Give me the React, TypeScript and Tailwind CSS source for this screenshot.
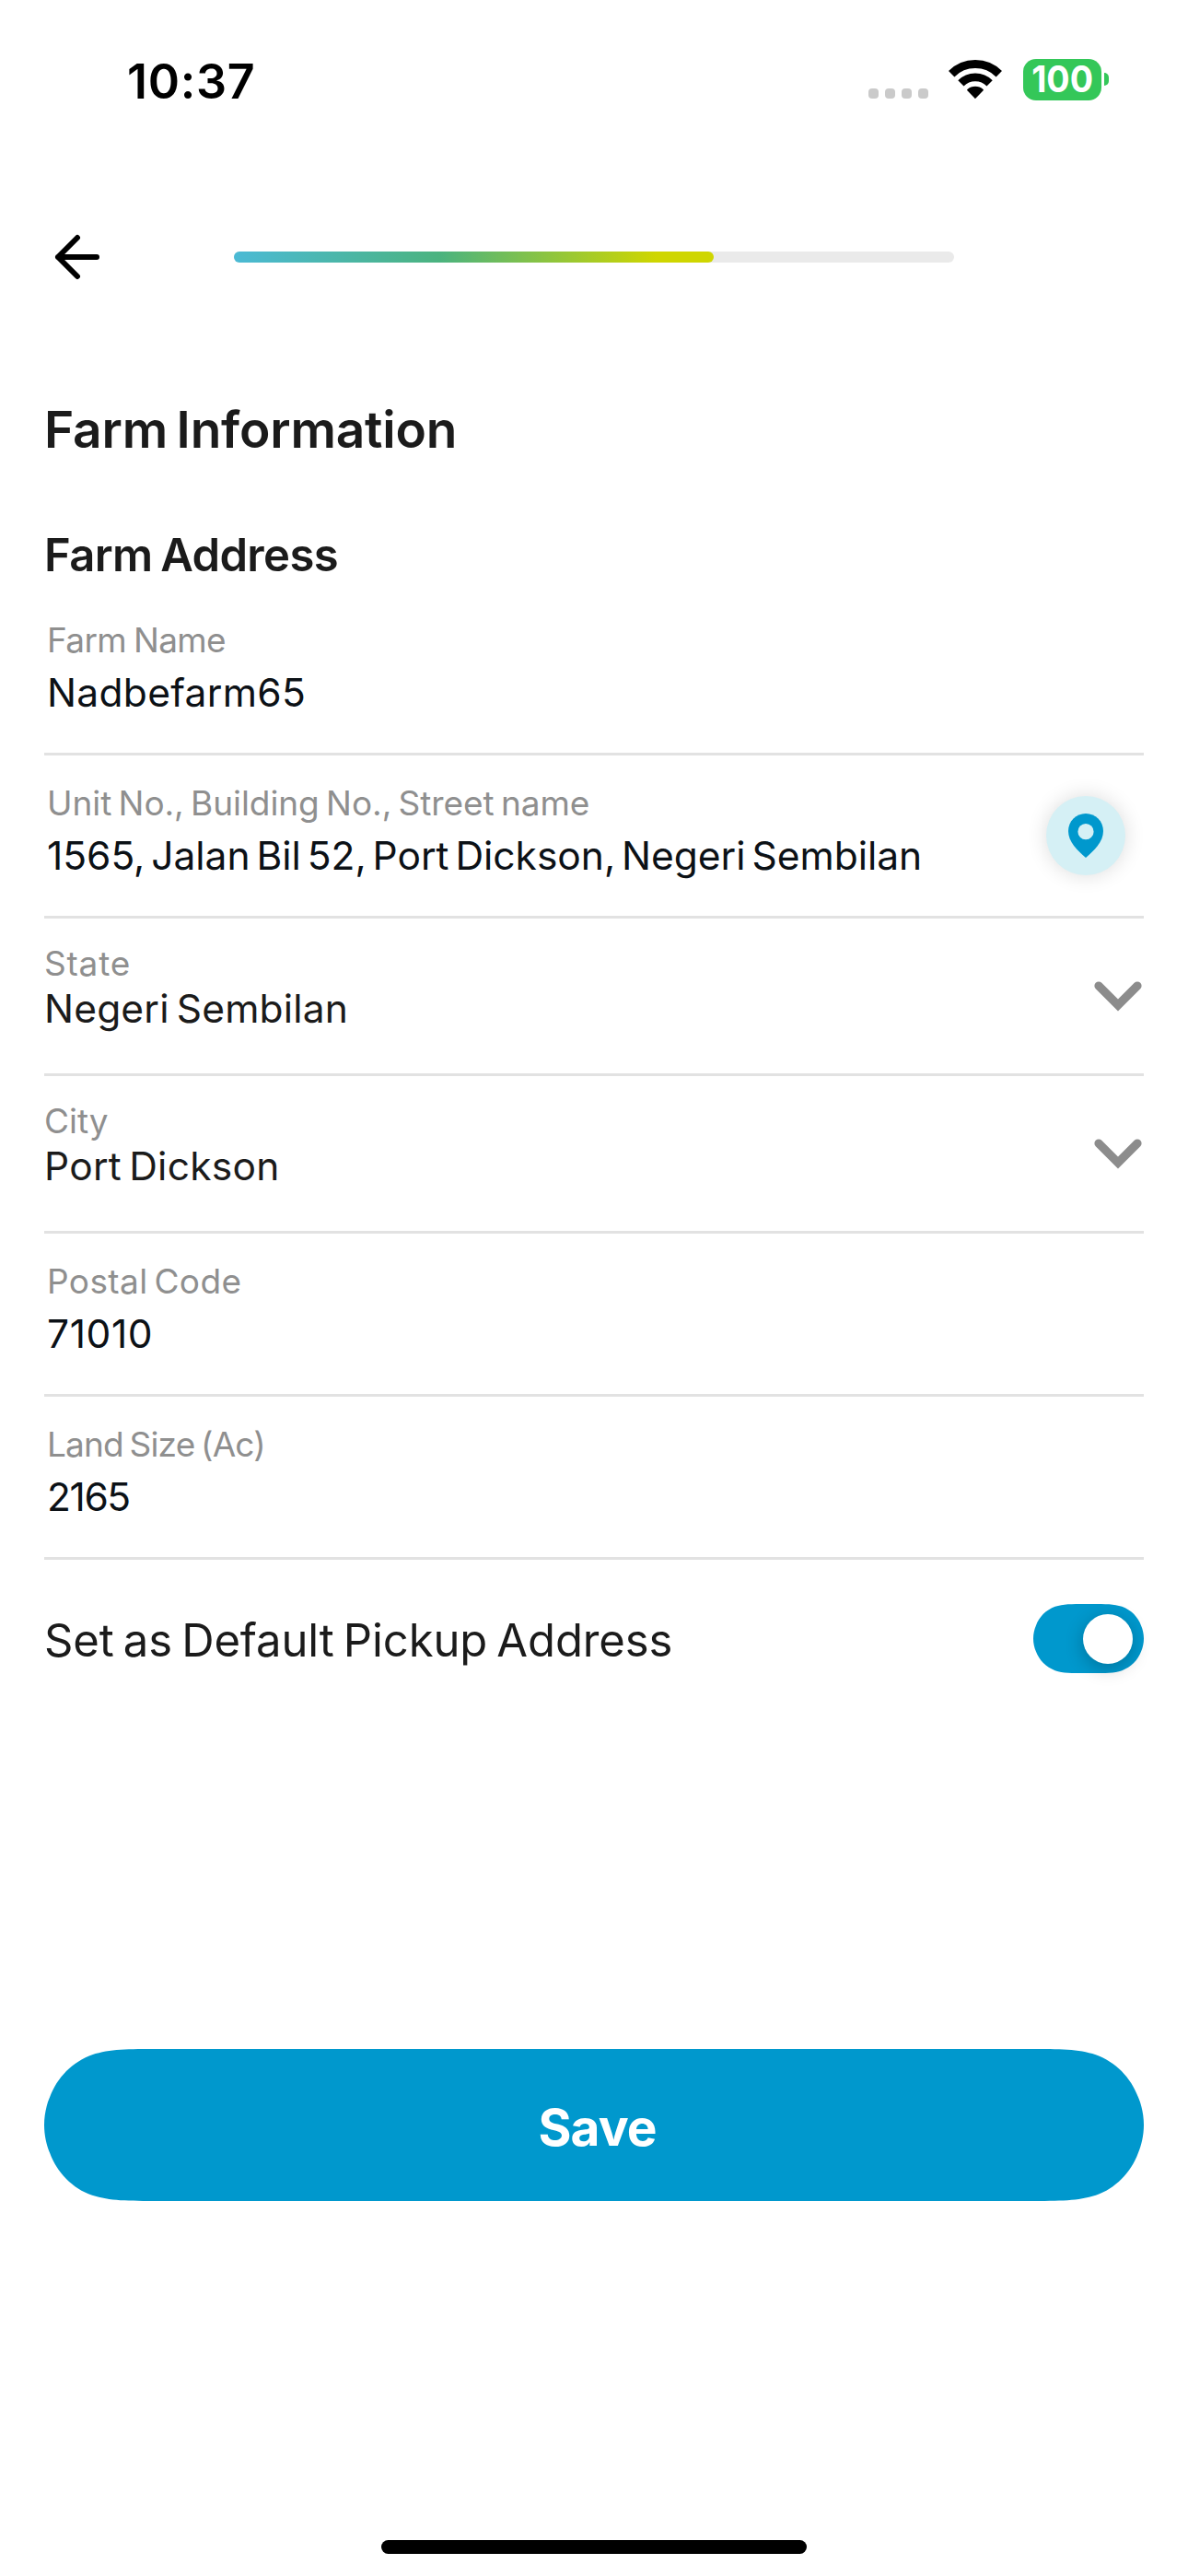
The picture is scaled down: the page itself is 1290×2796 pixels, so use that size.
import { useState, type ReactNode } from "react";

/** Outline of a pill with continuous (superelliptic) corners. */
function pillPath(w: number, h: number) {
  const r = h / 2;
  const a = 1.5286 * r;
  const b = 1.0885 * r;
  const c = 0.8684 * r;
  const d = 0.6315 * r;
  const e = 0.0749 * r;
  const f = 0.3728 * r;
  const g = 0.1691 * r;
  const i = 0.03 * r;
  const j = 0.73 * r;
  return [
    `M${a} 0H${w - a}`,
    `C${w - b} 0 ${w - c} 0 ${w - d} ${e}`,
    `C${w - f} ${g} ${w - g} ${f} ${w - e} ${d}`,
    `C${w - i} ${j} ${w} ${0.87 * r} ${w} ${r}`,
    `C${w} ${h - 0.87 * r} ${w - i} ${h - j} ${w - e} ${h - d}`,
    `C${w - g} ${h - f} ${w - f} ${h - g} ${w - d} ${h - e}`,
    `C${w - c} ${h} ${w - b} ${h} ${w - a} ${h}`,
    `H${a}`,
    `C${b} ${h} ${c} ${h} ${d} ${h - e}`,
    `C${f} ${h - g} ${g} ${h - f} ${e} ${h - d}`,
    `C${i} ${h - j} 0 ${h - 0.87 * r} 0 ${r}`,
    `C0 ${0.87 * r} ${i} ${j} ${e} ${d}`,
    `C${g} ${f} ${f} ${g} ${d} ${e}`,
    `C${c} 0 ${b} 0 ${a} 0Z`,
  ].join("");
}

function Pill({ width, height, color }: { width: number; height: number; color: string }) {
  return (
    <svg className="absolute inset-0" width={width} height={height} aria-hidden="true">
      <path d={pillPath(width, height)} fill={color} />
    </svg>
  );
}

function WifiIcon() {
  return (
    <svg className="ml-[22px] h-[44px] w-[58px]" viewBox="0 0 58 44" fill="none" stroke="#000">
      <path d="M3.2 16.2A36.5 36.5 0 0 1 54.8 16.2" strokeWidth="9" />
      <path d="M13.4 26.4A22 22 0 0 1 44.6 26.4" strokeWidth="8.8" />
      <path
        d="M21 33.6A12 12 0 0 1 37 33.6L29 42Z"
        fill="#000"
        strokeWidth="1.8"
        strokeLinejoin="round"
      />
    </svg>
  );
}

function StatusBar() {
  return (
    <div className="flex h-[176px] shrink-0 items-center justify-between pr-[86px] pl-[138px] text-black">
      <span className="pt-px text-[52px] leading-none font-semibold tracking-[0.7px]">10:37</span>
      <div className="flex -translate-y-[2px] items-center">
        <div className="mt-[30px] flex gap-[7px]">
          {[0, 1, 2, 3].map((dot) => (
            <span key={dot} className="size-[11px] rounded-[4px] bg-[#cacaca]" />
          ))}
        </div>
        <WifiIcon />
        <div className="ml-[23px] flex h-[45px] w-[85px] items-center justify-center rounded-[14px] bg-[#34c759] text-[40px] leading-none font-bold text-white">
          <span className="scale-x-[0.94]">100</span>
        </div>
        <span className="ml-[3px] h-[14px] w-[5px] rounded-r-full bg-[#34c759]" />
      </div>
    </div>
  );
}

function NavBar() {
  return (
    <div className="flex h-[206px] shrink-0 items-center pl-[59px]">
      <button aria-label="Back">
        <svg
          className="h-[50px] w-[50px]"
          viewBox="0 0 50 50"
          fill="none"
          stroke="#000"
          strokeWidth="6"
          strokeLinecap="round"
          strokeLinejoin="round"
        >
          <path d="M46 25H4M25 4L4 25L25 46" />
        </svg>
      </button>
      <div className="ml-[145px] h-[12px] w-[782px] rounded-full bg-[#eaeaea]">
        <div className="h-full w-[521px] rounded-full bg-[linear-gradient(92deg,#4bbad5_0%,#4bb37f_43%,#cfd600_88%)]" />
      </div>
    </div>
  );
}

type FieldProps = {
  label: string;
  value: string;
  labelClass?: string;
  valueClass?: string;
  className?: string;
  children?: ReactNode;
};

function InputField({ label, value, labelClass, valueClass, className = "h-[177px]", children }: FieldProps) {
  return (
    <div className={`flex items-end justify-between border-b-[3px] border-[#e2e2e2] ${className}`}>
      <div className="pb-[37px] pl-[3px] leading-[57px] whitespace-nowrap">
        <p className={`text-[37px] text-[#8f8f8f] ${labelClass ?? ""}`}>{label}</p>
        <p className={`text-[42.5px] text-[#0c1116] ${valueClass ?? ""}`}>{value}</p>
      </div>
      {children}
    </div>
  );
}

function SelectField({ label, value, labelClass, valueClass }: FieldProps) {
  return (
    <div className="flex h-[171px] items-end justify-between border-b-[3px] border-[#e2e2e2]">
      <div className="pb-[45px] leading-[50px] whitespace-nowrap">
        <p className={`-mb-px pt-px text-[37px] text-[#8f8f8f] ${labelClass ?? ""}`}>{label}</p>
        <p className={`text-[42.5px] text-[#1b1b1b] ${valueClass ?? ""}`}>{value}</p>
      </div>
      <svg
        className="mr-[2px] mb-[67px] h-[33px] w-[52px]"
        viewBox="0 0 52 33"
        fill="none"
        stroke="#8c8c8c"
        strokeWidth="9.2"
        strokeLinecap="round"
      >
        <path d="M5 5L26 26L47 5" />
      </svg>
    </div>
  );
}

function LocationButton() {
  return (
    <button
      aria-label="Pick location"
      className="mr-[20px] mb-[44px] flex size-[86px] items-center justify-center rounded-full bg-[#d5f0f5] shadow-[0_0_22px_rgba(0,0,0,0.14)]"
    >
      <svg className="h-[48px] w-[38px]" viewBox="0 0 38 48">
        <path
          d="M19 0C8.500 0 0 8.500 0 19C0 31 10 40 19 48C28 40 38 31 38 19C38 8.500 29.500 0 19 0Z"
          fill="#0098cd"
        />
        <circle cx="19" cy="19.700" r="8.600" fill="#d5f0f5" />
      </svg>
    </button>
  );
}

function Toggle({ on, onChange }: { on: boolean; onChange: () => void }) {
  return (
    <button
      role="switch"
      aria-checked={on}
      onClick={onChange}
      className={`relative flex h-[75px] w-[120px] items-center px-[12px] ${on ? "justify-end" : "justify-start"}`}
    >
      <Pill width={120} height={75} color={on ? "#0098cd" : "#e2e2e2"} />
      <span className="relative size-[54px] rounded-full bg-white shadow-[0_5px_20px_rgba(0,0,0,0.24)]" />
    </button>
  );
}

export default function App() {
  const [isDefault, setIsDefault] = useState(true);
  return (
    <div className="flex h-[2796px] w-[1290px] flex-col overflow-hidden bg-white font-['Inter',sans-serif]">
      <StatusBar />
      <NavBar />
      <main className="px-12">
        <h1 className="text-[55px] leading-[168px] font-semibold tracking-[-0.2px] text-[#1b1b1b] [word-spacing:-4px]">
          Farm Information
        </h1>
        <h2 className="-mb-px pt-px text-[49px] leading-[104px] font-semibold tracking-[-0.64px] text-[#1b1b1b] [word-spacing:-3px]">
          Farm Address
        </h2>
        <InputField
          className="h-[166px]"
          label="Farm Name"
          value="Nadbefarm65"
          labelClass="tracking-[-0.63px] [word-spacing:-2px]"
          valueClass="tracking-[0.3px]"
        />
        <InputField
          label="Unit No., Building No., Street name"
          value="1565, Jalan Bil 52, Port Dickson, Negeri Sembilan"
          labelClass="tracking-[-0.06px] [word-spacing:-3px]"
          valueClass="tracking-[-0.02px] [word-spacing:-5px]"
        >
          <LocationButton />
        </InputField>
        <SelectField
          label="State"
          value="Negeri Sembilan"
          labelClass="tracking-[0.8px]"
          valueClass="tracking-[0.17px] [word-spacing:-4px]"
        />
        <SelectField
          label="City"
          value="Port Dickson"
          valueClass="tracking-[0.25px] [word-spacing:-4px]"
        />
        <InputField
          label="Postal Code"
          value="71010"
          labelClass="tracking-[0.4px] [word-spacing:-4px]"
          valueClass="tracking-[0.6px]"
        />
        <InputField
          label="Land Size (Ac)"
          value="2165"
          labelClass="tracking-[-0.82px] [word-spacing:-3px]"
          valueClass="tracking-[-1.4px]"
        />
        <div className="flex h-[171px] items-center justify-between">
          <span className="pt-[3px] text-[49px] leading-none tracking-[-0.12px] text-[#1b1b1b] [word-spacing:-3.5px]">
            Set as Default Pickup Address
          </span>
          <Toggle on={isDefault} onChange={() => setIsDefault(!isDefault)} />
        </div>
        <button className="relative mt-[360px] flex h-[165px] w-full items-center justify-center pt-[5px] text-[55px] leading-none font-bold tracking-[-0.9px] text-white">
          <Pill width={1194} height={165} color="#0098cd" />
          <span className="relative pl-[7px]">Save</span>
        </button>
      </main>
      <div className="mx-auto mt-auto mb-6 h-[15px] w-[462px] shrink-0 rounded-full bg-black" />
    </div>
  );
}
